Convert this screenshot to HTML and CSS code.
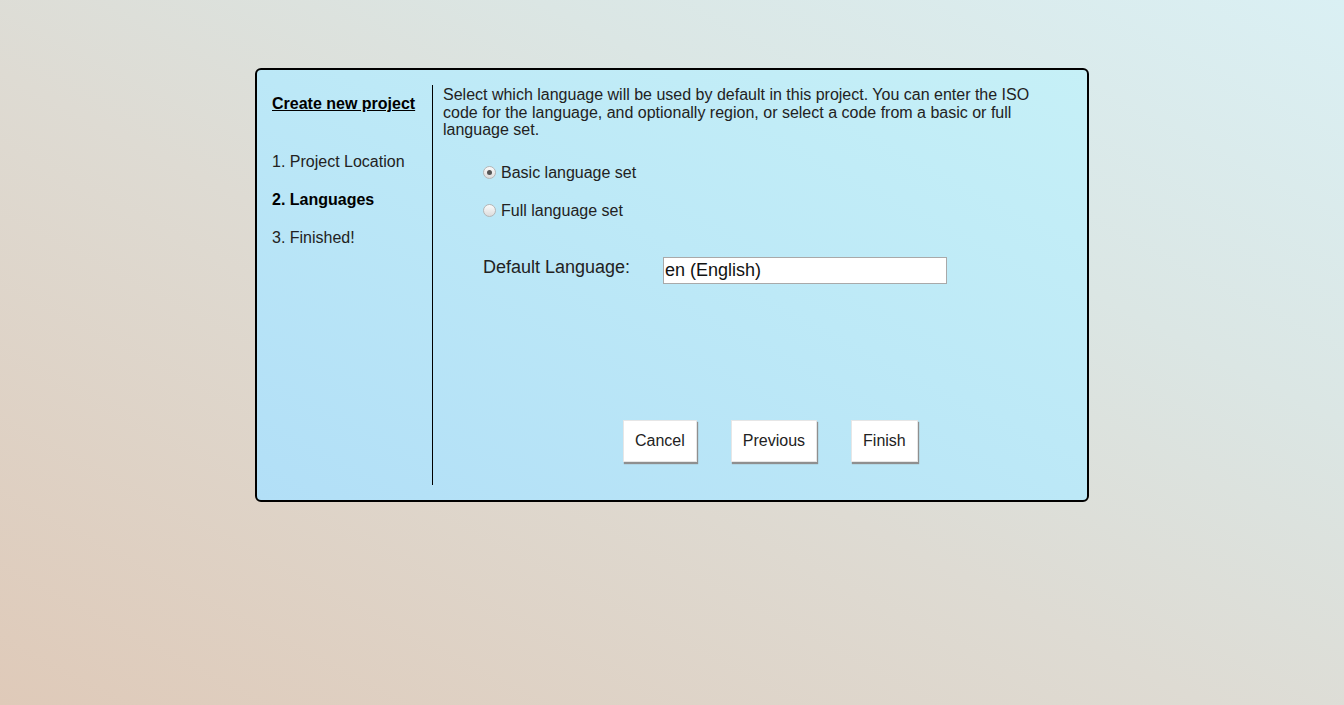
FILE: index.html
```html
<!DOCTYPE html>
<html>
<head>
<meta charset="utf-8">
<title>Create new project</title>
<link rel="stylesheet" href="styles.css">
</head>
<body>
<div class="wizard">
  <nav class="steps">
    <div class="title">Create new project</div>
    <div class="step">1. Project Location</div>
    <div class="step current">2. Languages</div>
    <div class="step">3. Finished!</div>
  </nav>
  <main class="content">
    <p class="desc">Select which language will be used by default in this project. You can enter the ISO code for the language, and optionally region, or select a code from a basic or full language set.</p>
    <label class="radio-row"><input type="radio" name="set" class="radio" checked><span>Basic language set</span></label>
    <label class="radio-row"><input type="radio" name="set" class="radio"><span>Full language set</span></label>
    <div class="lang-row">
      <span class="lang-label">Default Language:</span>
      <input type="text" class="lang-input" value="en (English)">
    </div>
    <div class="buttons">
      <button class="btn">Cancel</button>
      <button class="btn">Previous</button>
      <button class="btn">Finish</button>
    </div>
  </main>
</div>
</body>
</html>
```

FILE: styles.css
```css
html, body {
  margin: 0;
  height: 100%;
}
body {
  background: linear-gradient(to top right, #dfcab9 0%, #dedbd3 45%, #dbe6e4 70%, #daf0f4 100%);
  font-family: "Liberation Sans", Arial, sans-serif;
  color: #222;
  padding-top: 68px;
  box-sizing: border-box;
}
.wizard {
  width: 834px;
  height: 434px;
  margin: 0 auto;
  box-sizing: border-box;
  border: 2px solid #000;
  border-radius: 6px;
  background: linear-gradient(to top right, #b2dff7 0%, #bde9f7 55%, #c6f0f7 100%);
  display: flex;
  padding: 15px 0;
}
.steps {
  width: 176px;
  box-sizing: border-box;
  border-right: 1px solid #000;
  padding-left: 15px;
  font-size: 16px;
  line-height: 18px;
}
.title {
  font-weight: bold;
  text-decoration: underline;
  color: #000;
  margin-top: 10px;
  margin-bottom: 40px;
}
.step {
  margin-bottom: 20px;
}
.step.current {
  font-weight: bold;
  color: #000;
}
.content {
  flex: 1;
  padding-left: 10px;
  padding-top: 1px;
  font-size: 16px;
}
.desc {
  margin: 0;
  width: 600px;
  line-height: 17.5px;
}
.radio-row {
  display: flex;
  align-items: center;
  margin-left: 40px;
  height: 20px;
  margin-top: 24px;
}
.radio-row + .radio-row {
  margin-top: 18px;
}
.radio {
  appearance: none;
  -webkit-appearance: none;
  width: 13px;
  height: 13px;
  margin: 0 5px 0 0;
  border: 1px solid #b5b5b5;
  border-radius: 50%;
  background: linear-gradient(#fbfbfb, #dcdcdc);
  box-sizing: border-box;
  position: relative;
}
.radio:checked::after {
  content: "";
  position: absolute;
  left: 3px;
  top: 3px;
  width: 5px;
  height: 5px;
  border-radius: 50%;
  background: #555;
}
.lang-row {
  display: flex;
  align-items: center;
  margin-left: 40px;
  margin-top: 36px;
}
.lang-label {
  width: 180px;
  font-size: 18px;
  color: #222;
  position: relative;
  top: -3px;
}
.lang-input {
  width: 284px;
  height: 27px;
  box-sizing: border-box;
  border: 1px solid #a9a9a9;
  font-family: "Liberation Sans", Arial, sans-serif;
  font-size: 18px;
  padding: 0 1px;
  color: #111;
  background: #fff;
  outline: none;
}
.buttons {
  display: flex;
  margin-left: 180px;
  margin-top: 136px;
}
.btn {
  height: 42px;
  padding: 0 11px;
  font-family: "Liberation Sans", Arial, sans-serif;
  font-size: 16px;
  color: #222;
  background: #fff;
  border: 1px solid #e6e6e6;
  border-radius: 0;
  box-shadow: 1px 2px 1px #8f8f8f;
  margin-right: 34px;
}
```
